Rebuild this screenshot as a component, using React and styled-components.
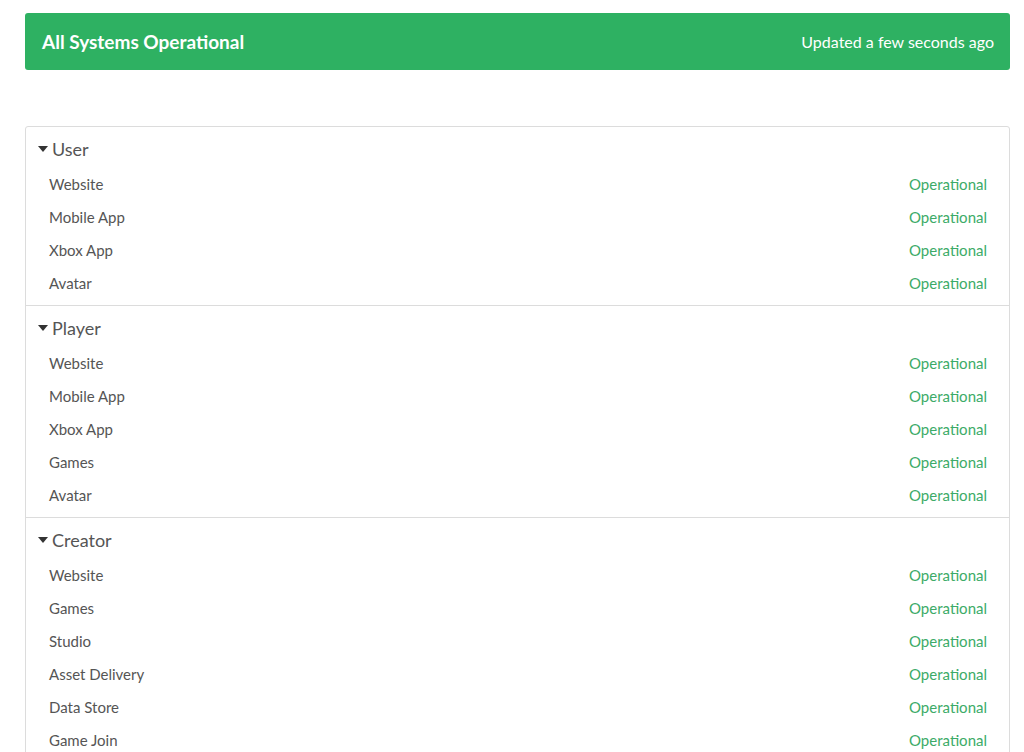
import styled, { createGlobalStyle } from "styled-components";

const Global = createGlobalStyle`
  body { margin: 0; background: #fff; font-family: Lato, "Open Sans", sans-serif; }
`;

const groups = [
  { name: "User", items: ["Website", "Mobile App", "Xbox App", "Avatar"] },
  { name: "Player", items: ["Website", "Mobile App", "Xbox App", "Games", "Avatar"] },
  {
    name: "Creator",
    items: ["Website", "Games", "Studio", "Asset Delivery", "Data Store", "Game Join"],
  },
];

const Page = styled.div`
  padding: 13px 14px 0 25px;
`;

const Banner = styled.div`
  height: 57px;
  background: #2eb162;
  border-radius: 3px;
  color: #fff;
  display: flex;
  align-items: center;
  justify-content: space-between;
  padding: 0 16px 0 17px;
`;

const Title = styled.div`
  font-size: 19px;
  font-weight: 700;
`;

const Updated = styled.div`
  font-size: 16px;
`;

const Card = styled.div`
  margin-top: 56px;
  border: 1px solid #dcdcdc;
  border-radius: 3px;
`;

const Group = styled.div`
  padding: 4px 0 6px;
  & + & {
    border-top: 1px solid #dcdcdc;
  }
`;

const Header = styled.div`
  height: 36px;
  display: flex;
  align-items: center;
  padding-left: 12px;
  font-size: 18px;
  color: #555;
  gap: 4px;
`;

const Caret = styled.span`
  width: 0;
  height: 0;
  border-left: 5px solid transparent;
  border-right: 5px solid transparent;
  border-top: 6px solid #333;
`;

const Row = styled.div`
  height: 33px;
  display: flex;
  align-items: center;
  justify-content: space-between;
  padding: 0 22px 0 23px;
  font-size: 15px;
  color: #555;
`;

const Status = styled.span`
  color: #3cab68;
`;

export default function App() {
  return (
    <Page>
      <Global />
      <Banner>
        <Title>All Systems Operational</Title>
        <Updated>Updated a few seconds ago</Updated>
      </Banner>
      <Card>
        {groups.map((g) => (
          <Group key={g.name}>
            <Header>
              <Caret />
              {g.name}
            </Header>
            {g.items.map((it) => (
              <Row key={it}>
                <span>{it}</span>
                <Status>Operational</Status>
              </Row>
            ))}
          </Group>
        ))}
      </Card>
    </Page>
  );
}
